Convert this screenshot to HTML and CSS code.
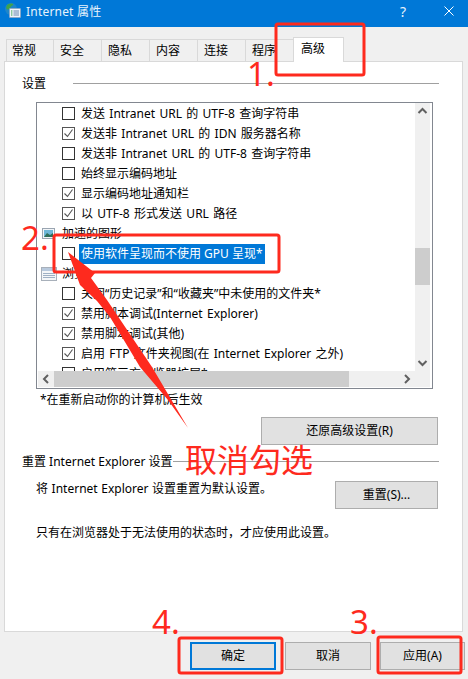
FILE: index.html
```html
<!DOCTYPE html>
<html lang="zh">
<head>
<meta charset="utf-8">
<title>Internet 属性</title>
<link rel="stylesheet" href="styles.css">
</head>
<body>
<div class="window">
  <header class="titlebar">
    <svg class="app-icon" width="16" height="15" viewBox="0 0 16 15">
      <circle cx="6" cy="6" r="6" fill="#1f86c9"/>
      <path d="M1.5 3C3 .5 6 0 8 1c1 1-1 1.500-2 2.500S5 6.500 3 6.500 1 5 1.500 3z" fill="#3fa34d"/>
      <rect x="4.500" y="5.500" width="11" height="9" rx="0.5" fill="#eef3fa" stroke="#8fa6c4" stroke-width="0.8"/>
      <path d="M6 8h1.400M6 10h1.400M6 12h1.400" stroke="#2f9e44" stroke-width="1.200"/>
      <path d="M8.500 8h5.500M8.500 10h5.500M8.500 12h5.500" stroke="#5b7da8" stroke-width="0.9"/>
    </svg>
    <span class="title">Internet 属性</span>
    <span class="help">?</span>
    <svg class="close" width="10" height="10" viewBox="0 0 10 10"><path d="M0.500 0.500l9 9M9.500 0.500l-9 9" stroke="#fff" stroke-width="1"/></svg>
  </header>

  <nav class="tabs">
    <span class="tab">常规</span>
    <span class="tab">安全</span>
    <span class="tab">隐私</span>
    <span class="tab">内容</span>
    <span class="tab">连接</span>
    <span class="tab">程序</span>
    <span class="tab active">高级</span>
  </nav>

  <main class="panel">
    <div class="legend legend-settings"><span>设置</span><i class="rule"></i></div>

    <div class="listbox">
      <div class="viewport">
        <div class="row"><span class="cb"></span><span>发送 Intranet URL 的 UTF-8 查询字符串</span></div>
        <div class="row"><span class="cb on"><svg width="11" height="11" viewBox="0 0 11 11"><path d="M1.500 5.500l3 3 5-7" fill="none" stroke="#555" stroke-width="1.100"/></svg></span><span>发送非 Intranet URL 的 IDN 服务器名称</span></div>
        <div class="row"><span class="cb"></span><span>发送非 Intranet URL 的 UTF-8 查询字符串</span></div>
        <div class="row"><span class="cb"></span><span>始终显示编码地址</span></div>
        <div class="row"><span class="cb on"><svg width="11" height="11" viewBox="0 0 11 11"><path d="M1.500 5.500l3 3 5-7" fill="none" stroke="#555" stroke-width="1.100"/></svg></span><span>显示编码地址通知栏</span></div>
        <div class="row"><span class="cb on"><svg width="11" height="11" viewBox="0 0 11 11"><path d="M1.500 5.500l3 3 5-7" fill="none" stroke="#555" stroke-width="1.100"/></svg></span><span>以 UTF-8 形式发送 URL 路径</span></div>
        <div class="row section">
          <svg class="sec-icon" width="14" height="14" viewBox="0 0 14 14">
            <rect x="0.500" y="1.500" width="12" height="10" fill="#f2f5f8" stroke="#9aa5b1"/>
            <rect x="2" y="3" width="9" height="7" fill="#6db7d8"/>
            <path d="M2 10l3-4 3 2 3-2v4z" fill="#2f6f5a"/>
          </svg>
          <span>加速的图形</span>
        </div>
        <div class="row"><span class="cb"></span><span class="selected">使用软件呈现而不使用 GPU 呈现*</span></div>
        <div class="row section">
          <svg class="sec-icon wide" width="16" height="14" viewBox="0 0 16 14">
            <rect x="0.500" y="0.500" width="15" height="13" fill="#f4f6f8" stroke="#a8b0ba"/>
            <rect x="1" y="1" width="14" height="3" fill="#b8c9dd"/>
            <path d="M2 6.500h12M2 8.500h12M2 10.500h12" stroke="#9fb0c4" stroke-width="1"/>
          </svg>
          <span>浏览</span>
        </div>
        <div class="row"><span class="cb"></span><span>关闭“历史记录”和“收藏夹”中未使用的文件夹*</span></div>
        <div class="row"><span class="cb on"><svg width="11" height="11" viewBox="0 0 11 11"><path d="M1.500 5.500l3 3 5-7" fill="none" stroke="#555" stroke-width="1.100"/></svg></span><span>禁用脚本调试(Internet Explorer)</span></div>
        <div class="row"><span class="cb on"><svg width="11" height="11" viewBox="0 0 11 11"><path d="M1.500 5.500l3 3 5-7" fill="none" stroke="#555" stroke-width="1.100"/></svg></span><span>禁用脚本调试(其他)</span></div>
        <div class="row"><span class="cb on"><svg width="11" height="11" viewBox="0 0 11 11"><path d="M1.500 5.500l3 3 5-7" fill="none" stroke="#555" stroke-width="1.100"/></svg></span><span>启用 FTP 文件夹视图(在 Internet Explorer 之外)</span></div>
        <div class="row"><span class="cb"></span><span>启用第三方浏览器扩展*</span></div>
      </div>
      <div class="vbar">
        <svg width="15" height="16" viewBox="0 0 15 16"><path d="M3.500 10l4-4 4 4" fill="none" stroke="#606060" stroke-width="2"/></svg>
        <div class="vtrack"><div class="vthumb"></div></div>
        <svg width="15" height="16" viewBox="0 0 15 16"><path d="M3.500 6l4 4 4-4" fill="none" stroke="#606060" stroke-width="2"/></svg>
      </div>
      <div class="hbar">
        <svg width="16" height="16" viewBox="0 0 16 16"><path d="M10 4l-4 4 4 4" fill="none" stroke="#606060" stroke-width="2"/></svg>
        <div class="hthumb"></div>
        <svg class="harrow-r" width="16" height="16" viewBox="0 0 16 16"><path d="M6 4l4 4-4 4" fill="none" stroke="#606060" stroke-width="2"/></svg>
      </div>
      <div class="corner"></div>
    </div>

    <p class="note">*在重新启动你的计算机后生效</p>

    <div class="btn-line"><button class="btn btn-restore">还原高级设置(R)</button></div>

    <div class="legend legend-reset"><span>重置 Internet Explorer 设置</span><i class="rule"></i></div>

    <div class="reset-row">
      <p class="reset-text">将 Internet Explorer 设置重置为默认设置。</p>
      <button class="btn btn-reset">重置(S)...</button>
    </div>

    <p class="warn">只有在浏览器处于无法使用的状态时，才应使用此设置。</p>
  </main>

  <footer class="footer">
    <button class="btn btn-foot default">确定</button>
    <button class="btn btn-foot">取消</button>
    <button class="btn btn-foot last">应用(A)</button>
  </footer>

  <svg class="marks" width="468" height="679" viewBox="0 0 468 679">
    <g fill="none" stroke="#fe2a1e" stroke-width="3" stroke-linejoin="round">
      <rect x="276" y="24" width="88" height="51" rx="2"/>
      <rect x="54" y="235" width="225" height="37" rx="2"/>
      <rect x="378" y="637" width="83" height="36" rx="2"/>
      <rect x="179" y="638" width="103" height="35" rx="2"/>
    </g>
    <polygon points="68,252 95,273 91,278 107,300 152,367 188,428 168,400 140,367 110,317 97,301 80,285" fill="#fe2a1e"/>
  </svg>
  <span class="mark mark-1">1.</span>
  <span class="mark mark-2">2.</span>
  <span class="mark mark-3">3.</span>
  <span class="mark mark-4">4.</span>
  <span class="mark mark-cancel">取消勾选</span>
</div>
</body>
</html>
```
FILE: styles.css
```css
* { box-sizing: border-box; }
html, body { margin: 0; padding: 0; }
body {
  width: 468px;
  height: 679px;
  overflow: hidden;
  background: #f0f0f0;
  font: 12px/16px "Noto Sans", "Noto Sans CJK SC", sans-serif;
  color: #000;
}
.window { position: relative; width: 468px; height: 679px; display: flex; flex-direction: column; }

.titlebar {
  height: 27px;
  background: #0078d7;
  color: #fff;
  display: flex;
  align-items: flex-start;
  padding: 0 14px 0 5px;
  flex: none;
}
.app-icon { flex: none; margin-top: 3px; }
.title { margin: 4px 0 0 5px; font-size: 12px; letter-spacing: 0.2px; color: #e8f3fc; }
.help { margin: 3px 38px 0 auto; font-size: 14px; line-height: 18px; color: #e8f3fc; }
.close { margin-top: 6px; }

.tabs {
  height: 34px;
  flex: none;
  display: flex;
  align-items: flex-end;
  padding-left: 6px;
  position: relative;
  z-index: 1;
}
.tab {
  width: 48px;
  height: 22px;
  border: 1px solid #d9d9d9;
  border-bottom: 0;
  border-left-width: 0;
  background: #f0f0f0;
  display: flex;
  align-items: center;
  padding-left: 6px;
  color: #000;
}
.tab:first-child { border-left-width: 1px; width: 48px; padding-left: 5px; }
.tab.active {
  width: 51px;
  height: 25px;
  margin-left: -1px;
  margin-bottom: -1px;
  background: #fff;
  border-left-width: 1px;
  padding: 0 0 2px 7px;
}

.panel {
  flex: none;
  width: 459px;
  height: 571px;
  margin-left: 4px;
  background: #fff;
  border: 1px solid #d9d9d9;
  padding: 14px 24px 0 17px;
  display: flex;
  flex-direction: column;
}
.legend { display: flex; align-items: center; }
.legend .rule { flex: 1; height: 1px; background: #a0a0a0; margin: -2px -1px 0 0; }
.legend-settings { height: 16px; }
.legend-settings .rule { margin-left: 27px; }
.legend-reset { height: 16px; margin-top: 9px; }
.legend-reset .rule { margin-left: 0; }

.listbox {
  width: 397px;
  height: 287px;
  margin: 10px 0 0 14px;
  border: 1px solid #828790;
  padding: 0 2px 0 1px;
  display: grid;
  grid-template-columns: 377px 15px;
  grid-template-rows: 268px 17px;
  background: #fff;
  flex: none;
}
.viewport { overflow: hidden; word-spacing: 1.2px; }
.row { height: 20px; display: flex; align-items: center; padding: 1px 0 0 24px; white-space: nowrap; }
.row.section { padding-left: 4px; }
.cb {
  width: 13px;
  height: 13px;
  border: 1px solid #333;
  flex: none;
  margin-right: 6px;
  display: block;
  background: #fff;
}
.cb.on { border-color: #555; }
.cb svg { display: block; }
.selected { background: #0078d7; color: #fff; margin-left: -2px; padding: 0 2px; height: 20px; line-height: 20px; word-spacing: 0; }
.sec-icon { flex: none; margin-right: 6px; }
.sec-icon.wide { margin-left: -1px; margin-right: 5px; }

.vbar { background: #f0f0f0; display: flex; flex-direction: column; height: 268px; }
.vbar svg { flex: none; display: block; }
.vtrack { flex: 1; padding-top: 129px; }
.vthumb { height: 37px; background: #cdcdcd; }
.hbar { background: #f0f0f0; display: flex; height: 16px; }
.hbar svg { flex: none; display: block; }
.hthumb { width: 295px; background: #cdcdcd; }
.harrow-r { margin-left: auto; }
.corner { background: #f0f0f0; height: 16px; }

.note { margin: 3px 0 0 18px; height: 16px; }
.btn-line { display: flex; justify-content: flex-end; margin-top: 9px; }
.btn {
  font: inherit;
  color: #000;
  background: #e1e1e1;
  border: 1px solid #adadad;
  padding: 0;
  display: block;
}
.btn-restore { width: 177px; height: 28px; }
.reset-row { display: flex; justify-content: space-between; margin-top: 11px; padding-left: 14px; height: 28px; }
.reset-text { margin: 0; word-spacing: 0.5px; }
.btn-reset { width: 103px; height: 28px; }
.warn { margin: 16px 0 0 14px; }

.footer { flex: 1; display: flex; justify-content: flex-end; gap: 9px; padding: 10px 3px 0 0; }
.btn-foot { width: 86px; height: 28px; }
.btn-foot.last { width: 85px; }
.btn-foot.default { border: 2px solid #0078d7; }

.marks { position: absolute; left: 0; top: 0; pointer-events: none; z-index: 2; }
.mark { position: absolute; color: #fe2a1e; font-size: 33px; line-height: 30px; z-index: 3; white-space: nowrap; }
.mark-1 { left: 247px; top: 59px; }
.mark-2 { left: 21px; top: 223px; }
.mark-3 { left: 350px; top: 607px; }
.mark-4 { left: 152px; top: 607px; }
.mark-cancel { left: 185px; top: 445px; font-size: 32px; }
```
